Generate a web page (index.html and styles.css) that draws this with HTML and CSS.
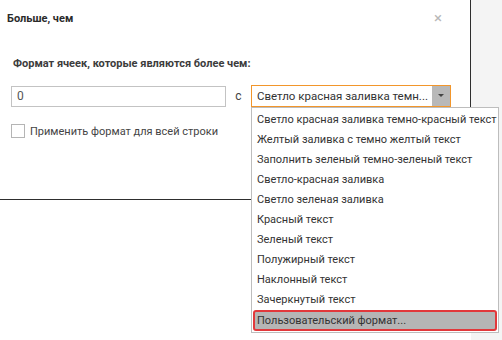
FILE: index.html
```html
<!DOCTYPE html>
<html lang="ru">
<head>
  <meta charset="UTF-8">
  <title>Больше, чем</title>
  <link rel="stylesheet" href="styles.css">
</head>
<body>
  <div class="screen">
    <!-- Dialog -->
    <div class="dialog">
      <div class="dialog-header">
        <span class="dialog-title">Больше, чем</span>
        <span class="dialog-close">&#215;</span>
      </div>
      <div class="dialog-body">
        <div class="caption">Формат ячеек, которые являются более чем:</div>
        <div class="value-row">
          <input class="value-input" type="text" value="0">
          <span class="with-label">с</span>
          <div class="select">
            <div class="select-box">
              <span class="select-text">Светло красная заливка темн...</span>
              <span class="select-arrow"></span>
            </div>
            <ul class="select-list">
              <li>Светло красная заливка темно-красный текст</li>
              <li>Желтый заливка с темно желтый текст</li>
              <li>Заполнить зеленый темно-зеленый текст</li>
              <li>Светло-красная заливка</li>
              <li>Светло зеленая заливка</li>
              <li>Красный текст</li>
              <li>Зеленый текст</li>
              <li>Полужирный текст</li>
              <li>Наклонный текст</li>
              <li>Зачеркнутый текст</li>
              <li class="active">Пользовательский формат...</li>
            </ul>
          </div>
        </div>
        <label class="check-row">
          <span class="checkbox"></span>
          <span>Применить формат для всей строки</span>
        </label>
      </div>
    </div>
    <div class="side"></div>
  </div>
</body>
</html>
```

FILE: styles.css
```css
body {
  margin: 0;
  font-family: Roboto, "Noto Sans", sans-serif;
  font-size: 11px;
  color: #444;
  background-color: #fff;
  overflow: hidden;
}

.screen {
  display: flex;
  width: 502px;
  height: 340px;
}

.dialog {
  width: 471px;
  height: 200px;
  border-right: 1px solid #2e2e2e;
  border-bottom: 1px solid #2e2e2e;
  box-sizing: border-box;
  background-color: #fff;
}

.side {
  flex-grow: 1;
  height: 100%;
  background-color: #f4f4f4;
}

.dialog-header {
  display: flex;
  justify-content: space-between;
  align-items: center;
  padding: 8px 28px 0 7px;
  height: 20px;
}

.dialog-title {
  font-weight: bold;
  font-size: 11px;
  color: #2b2b2b;
}

.dialog-close {
  font-size: 15px;
  color: #b8b8b8;
}

.dialog-body {
  padding: 29px 0 0 11px;
}

.caption {
  font-weight: bold;
  color: #3c3c3c;
  padding-left: 2px;
}

.value-row {
  display: flex;
  align-items: center;
  margin-top: 15px;
}

.value-input {
  width: 215px;
  height: 21px;
  box-sizing: border-box;
  border: 1px solid #c3c3c3;
  padding: 0 5px;
  font-family: inherit;
  font-size: 12px;
  color: #555;
  outline: none;
}

.with-label {
  width: 25px;
  text-align: center;
  font-size: 12px;
  padding-bottom: 1px;
}

.select {
  position: relative;
}

.select-box {
  display: flex;
  align-items: stretch;
  width: 200px;
  height: 22px;
  box-sizing: border-box;
  border: 1px solid #f2962b;
}

.select-text {
  flex-grow: 1;
  padding-left: 5px;
  line-height: 20px;
  font-size: 11.5px;
  color: #333;
  white-space: nowrap;
  overflow: hidden;
}

.select-arrow {
  width: 18px;
  flex-shrink: 0;
  background-color: #b8b8b8;
  position: relative;
}

.select-arrow::after {
  content: "";
  position: absolute;
  left: 6px;
  top: 8px;
  border-left: 3px solid transparent;
  border-right: 3px solid transparent;
  border-top: 3px solid #444;
}

.select-list {
  position: absolute;
  left: 0;
  top: 22px;
  width: 248px;
  margin: 0;
  padding: 2px 1px 1px 1px;
  list-style: none;
  background-color: #fff;
  border: 1px solid #bdbdbd;
  box-sizing: border-box;
}

.select-list li {
  height: 20px;
  line-height: 20px;
  padding-left: 4px;
  font-size: 11px;
  color: #333;
  white-space: nowrap;
}

.select-list li.active {
  height: 21px;
  line-height: 18px;
  background-color: #b5b5b5;
  border: 2px solid #e2383b;
  border-radius: 3px;
  box-sizing: border-box;
  padding-left: 2px;
}

.check-row {
  display: flex;
  align-items: center;
  margin-top: 17px;
  font-size: 11px;
}

.checkbox {
  width: 12px;
  height: 12px;
  border: 1px solid #b5b5b5;
  margin-right: 5px;
}
```
